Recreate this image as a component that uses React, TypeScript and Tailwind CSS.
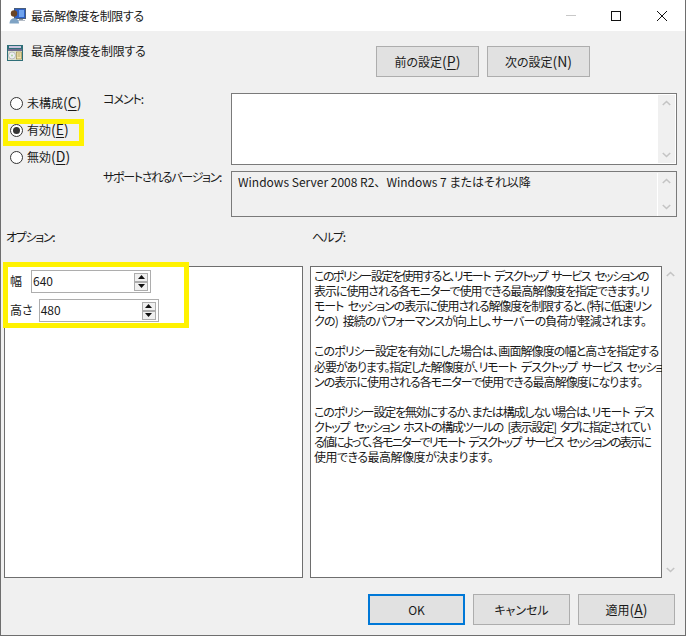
const font = { fontFamily: '"Noto Sans CJK JP", "Noto Sans", sans-serif' };

function Key({ k, u = true }: { k: string; u?: boolean }) {
  return (
    <span className="text-[14px] leading-none tracking-[0px]">
      ({u ? <span className="underline underline-offset-2">{k}</span> : k})
    </span>
  );
}

function Radio({ checked, children }: { checked?: boolean; children: React.ReactNode }) {
  return (
    <div className="flex h-[27px] items-center gap-[4px] text-[12px] text-[#1a1a1a]">
      <span className="flex h-[13px] w-[13px] items-center justify-center rounded-full border border-[#333] bg-white">
        {checked && <span className="h-[7px] w-[7px] rounded-full bg-[#333]" />}
      </span>
      <span className="-mt-[2px]">{children}</span>
    </div>
  );
}

function Btn({ children, w, focus }: { children: React.ReactNode; w: string; focus?: boolean }) {
  return (
    <div
      className={`flex items-center justify-center bg-[#e1e1e1] text-[12px] text-[#1a1a1a] ${w} ${
        focus ? "border-2 border-[#0078d7]" : "border border-[#adadad]"
      }`}
    >
      <span>{children}</span>
    </div>
  );
}

function ScrollArrows({ h, bg = "bg-[#f0f0f0]" }: { h: string; bg?: string }) {
  return (
    <div className={`flex w-[17px] flex-col items-center justify-between py-[5px] ${h} ${bg}`}>
      <svg width="9" height="6" viewBox="0 0 9 6"><path d="M0.8 5 L4.5 1.5 L8.2 5" fill="none" stroke="#c4c4c4" strokeWidth="1.6" /></svg>
      <svg width="9" height="6" viewBox="0 0 9 6"><path d="M0.8 1 L4.5 4.5 L8.2 1" fill="none" stroke="#c4c4c4" strokeWidth="1.6" /></svg>
    </div>
  );
}

function Spin({ label, value, gap, w }: { label: string; value: string; gap: string; w: string }) {
  return (
    <div className={`flex h-[23px] items-center text-[12px] text-[#1a1a1a] ${gap}`}>
      <span className="-mt-[2px]">{label}</span>
      <div className={`flex h-[23px] items-center justify-between border border-[#adadad] bg-white pl-[1px] pr-[1px] ${w}`}>
        <span className="-mt-[2px] text-[12px]">{value}</span>
        <div className="mr-[1px] flex flex-col">
          <div className="flex h-[9px] w-[14px] items-center justify-center border border-[#adadad] bg-[#f0f0f0]">
            <svg width="7" height="4" viewBox="0 0 7 4"><path d="M3.5 0 L7 4 L0 4 Z" fill="#111" /></svg>
          </div>
          <div className="flex h-[9px] w-[14px] items-center justify-center border border-[#adadad] bg-[#f0f0f0]">
            <svg width="7" height="4" viewBox="0 0 7 4"><path d="M0 0 L7 0 L3.5 4 Z" fill="#111" /></svg>
          </div>
        </div>
      </div>
    </div>
  );
}

export default function App() {
  return (
    <div style={font} className="relative flex h-[636px] w-[686px] flex-col overflow-hidden border-x border-b border-[#6e6e6e] bg-[#f0f0f0] text-[#1a1a1a] [font-feature-settings:'palt']">
      {/* Title bar */}
      <div className="flex h-[31px] items-center bg-white">
        <svg className="ml-[8px]" width="17" height="17" viewBox="0 0 17 17">
          <rect x="5.5" y="1.5" width="11" height="10" fill="#2c5fc7" stroke="#4a5f7a" strokeWidth="1" />
          <rect x="10" y="3" width="5" height="7" fill="#6fa4ee" />
          <rect x="10" y="12" width="4" height="1" fill="#8b97a5" />
          <rect x="8" y="13" width="8" height="1" fill="#b4bcc6" />
          <circle cx="5" cy="6.5" r="3.2" fill="#6a4526" />
          <path d="M0.5 16.5 C0.5 9.5 10 9.5 10 16.5 Z" fill="#7fa3c4" />
        </svg>
        <span className="ml-[5px] text-[12px] tracking-[-0.4px]">最高解像度を制限する</span>
        <div className="ml-auto flex items-center">
          <div className="mr-[35px] h-[1px] w-[10px] bg-[#c8c8c8]" />
          <div className="mr-[36px] h-[10px] w-[10px] border border-[#111]" />
          <svg className="mr-[18px]" width="10" height="10" viewBox="0 0 10 10">
            <path d="M0 0 L10 10 M10 0 L0 10" stroke="#111" strokeWidth="1" />
          </svg>
        </div>
      </div>

      {/* Heading and navigation */}
      <div className="flex h-[46px] justify-between pt-[15px]">
        <div className="flex">
          <svg className="ml-[6px] mt-[-1px]" width="16" height="16" viewBox="0 0 16 16">
            <rect x="0" y="0" width="16" height="16" fill="#2f6f78" />
            <rect x="2" y="1" width="12" height="2" fill="#c9c3de" />
            <rect x="1" y="4" width="14" height="2" fill="#6d6a8c" />
            <rect x="1" y="6" width="14" height="9" fill="#dfe3cf" />
            <circle cx="5" cy="10.5" r="3.5" fill="#eceef0" stroke="#8a8f96" strokeWidth="0.5" />
            <circle cx="5" cy="10.5" r="1" fill="#a8d3a0" />
            <rect x="9.5" y="7" width="5" height="7" fill="#f1e3ae" stroke="#8e7d3c" strokeWidth="0.6" />
            <path d="M10.5 9 H13.5 M10.5 11 H13.5" stroke="#8e7d3c" strokeWidth="0.6" />
          </svg>
          <span className="ml-[8px] -mt-[4px] text-[12px] tracking-[-0.2px]">最高解像度を制限する</span>
        </div>
        <div className="flex h-[31px] gap-[8px] pr-[95px]">
          <Btn w="h-[31px] w-[103px]">前の設定<Key k="P" /></Btn>
          <Btn w="h-[31px] w-[103px]">次の設定<Key k="N" u={false} /></Btn>
        </div>
      </div>

      {/* Upper section */}
      <div className="flex h-[152px] pt-[16px]">
        <div className="ml-[9px] -mt-[3px] w-[93px]">
          <Radio>未構成<Key k="C" /></Radio>
          <Radio checked>有効<Key k="E" /></Radio>
          <Radio>無効<Key k="D" /></Radio>
        </div>
        <div className="flex w-[128px] flex-col whitespace-nowrap text-[12px]">
          <span className="h-[77px] leading-[12px] tracking-[-1px]">コメント:</span>
          <span className="leading-[14px] tracking-[-1.3px]">サポートされるバージョン:</span>
        </div>
        <div className="flex w-[446px] flex-col gap-[6px]">
          <div className="flex h-[72px] justify-between border border-[#7a7a7a] bg-white p-[1px]">
            <div />
            <ScrollArrows h="h-[68px]" />
          </div>
          <div className="flex h-[46px] justify-between border border-[#7a7a7a] bg-[#f0f0f0] pl-[6px] pr-[1px] pt-[2px]">
            <span className="text-[12px] leading-[16px]">Windows Server 2008 R2<span className="[font-feature-settings:normal]">、</span>Windows 7 またはそれ以降</span>
            <div className="-mt-[1px] border-l border-white"><ScrollArrows h="h-[42px]" /></div>
          </div>
        </div>
      </div>

      {/* Labels */}
      <div className="flex h-[37px] items-start text-[12px] leading-[16px]">
        <span className="ml-[5px] w-[306px] tracking-[-1.3px]">オプション:</span>
        <span className="tracking-[-1.2px]">ヘルプ:</span>
      </div>

      {/* Panels */}
      <div className="flex h-[312px]">
        <div className="ml-[3px] flex w-[299px] flex-col gap-[6px] border border-[#6e6e6e] bg-white pl-[5px] pt-[3px]">
          <Spin label="幅" value="640" gap="gap-[9px]" w="w-[120px]" />
          <Spin label="高さ" value="480" gap="gap-[6px]" w="w-[120px]" />
        </div>
        <div className="ml-[7px] w-[352px] whitespace-nowrap border border-[#6e6e6e] bg-white pl-[3px] pt-[1px] text-[12px] leading-[15.1px] text-[#1a1a1a] [word-spacing:3px]">
          <p className="tracking-[-1.55px]">このポリシー設定を使用すると、リモート デスクトップ サービス セッションの</p>
          <p className="tracking-[-1.05px]">表示に使用される各モニターで使用できる最高解像度を指定できます。リ</p>
          <p className="tracking-[-1.1px]">モート セッションの表示に使用される解像度を制限すると、(特に低速リン</p>
          <p className="tracking-[-0.85px]">クの) 接続のパフォーマンスが向上し、サーバーの負荷が軽減されます。</p>
          <p className="mt-[15.1px] tracking-[-0.9px]">このポリシー設定を有効にした場合は、画面解像度の幅と高さを指定する</p>
          <p className="tracking-[-1.1px]">必要があります。指定した解像度が、リモート デスクトップ サービス セッショ</p>
          <p className="tracking-[-0.95px]">ンの表示に使用される各モニターで使用できる最高解像度になります。</p>
          <p className="mt-[15.1px] tracking-[-1.15px]">このポリシー設定を無効にするか、または構成しない場合は、リモート デス</p>
          <p className="tracking-[-1.3px]">クトップ セッション ホストの構成ツールの [表示設定] タブに指定されてい</p>
          <p className="tracking-[-1.7px]">る値によって、各モニターでリモート デスクトップ サービス セッションの表示に</p>
          <p className="tracking-[-0.5px]">使用できる最高解像度が決まります。</p>
        </div>
        <ScrollArrows h="h-[312px]" />
      </div>

      {/* Footer */}
      <div className="mt-[16px] flex justify-end gap-[8px] pr-[10px]">
        <Btn w="h-[31px] w-[97px]" focus>OK</Btn>
        <Btn w="h-[31px] w-[97px]">キャンセル</Btn>
        <Btn w="h-[31px] w-[97px]">適用<Key k="A" /></Btn>
      </div>

      {/* Yellow highlights */}
      <div className="absolute left-[2px] top-[119px] h-[27px] w-[81px] border-[5px] border-[#fff200]" />
      <div className="absolute left-[2px] top-[262px] h-[66px] w-[186px] border-[5px] border-[#fff200]" />
    </div>
  );
}
